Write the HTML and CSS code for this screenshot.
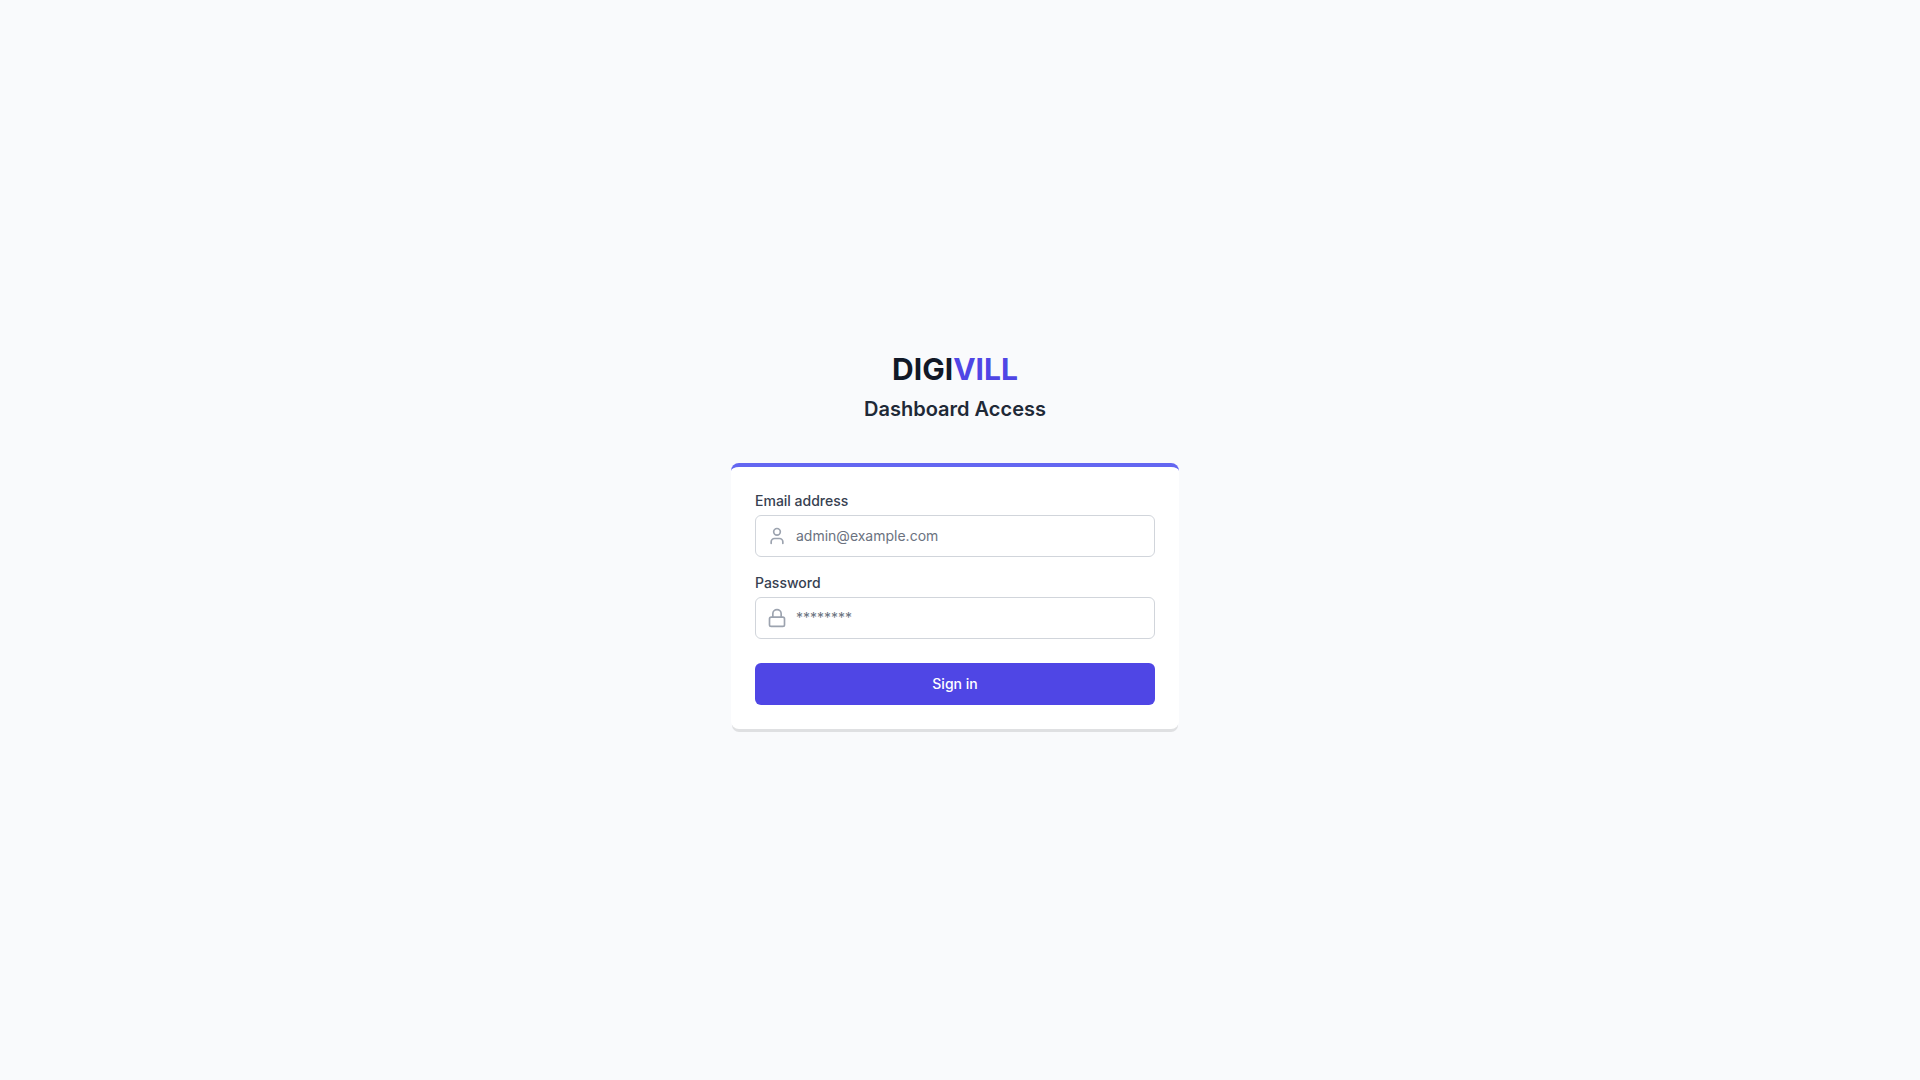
FILE: index.html
```html
<!DOCTYPE html>
<html lang="en">
<head>
    <meta charset="UTF-8">
    <meta name="viewport" content="width=device-width, initial-scale=1.0">
    <title>Digivill - Dashboard Access</title>
    <link rel="stylesheet" href="styles.css">
</head>
<body>
    <main class="login">
        <header class="login-header">
            <h1>DIGI<span>VILL</span></h1>
            <h2>Dashboard Access</h2>
        </header>

        <form class="card" action="#" method="post">
            <!-- Email -->
            <div class="field">
                <label for="email">Email address</label>
                <div class="input-box">
                    <svg class="icon" viewBox="0 0 24 24" aria-hidden="true">
                        <path d="M19 21v-2a4 4 0 0 0-4-4H9a4 4 0 0 0-4 4v2"/>
                        <circle cx="12" cy="7" r="4"/>
                    </svg>
                    <input type="email" id="email" name="email" placeholder="admin@example.com" required>
                </div>
            </div>
            <!-- Password -->
            <div class="field">
                <label for="password">Password</label>
                <div class="input-box">
                    <svg class="icon" viewBox="0 0 24 24" aria-hidden="true">
                        <rect x="3" y="11" width="18" height="11" rx="2"/>
                        <path d="M7 11V7a5 5 0 0 1 10 0v4"/>
                    </svg>
                    <input type="password" id="password" name="password" placeholder="********" required>
                </div>
            </div>
            <button type="submit" class="btn">Sign in</button>
        </form>
    </main>
</body>
</html>
```
FILE: styles.css
```css
* {
    box-sizing: border-box;
}

body {
    margin: 0;
    padding: 16px;
    padding-right: 26px;
    min-height: 100vh;
    display: flex;
    align-items: center;
    justify-content: center;
    background: #f9fafc;
    font-family: 'Inter', sans-serif;
    color: #1f2937;
}

.login {
    width: 100%;
    max-width: 448px;
}

.login-header {
    margin-bottom: 40px;
    text-align: center;
}

.login-header h1 {
    margin: 0;
    font-size: 30px;
    line-height: 36px;
    font-weight: 700;
    color: #111827;
}

.login-header h1 span {
    color: #4f46e5;
}

.login-header h2 {
    margin: 8px 0 0;
    font-size: 20px;
    line-height: 28px;
    font-weight: 600;
}

.card {
    display: flex;
    flex-direction: column;
    gap: 16px;
    padding: 24px;
    background: #fff;
    border-top: 4px solid #6366f1;
    border-radius: 8px;
    box-shadow: 0 4px 0 -1px #dfe0e2;
}

.field label {
    display: block;
    margin-bottom: 4px;
    font-size: 14px;
    line-height: 20px;
    font-weight: 500;
    color: #374151;
}

.input-box {
    position: relative;
}

/* icon sits over the left padding of the input */
.icon {
    position: absolute;
    top: 0;
    bottom: 0;
    left: 12px;
    margin: auto 0;
    width: 20px;
    height: 20px;
    fill: none;
    stroke: #9ca3af;
    stroke-width: 2;
    stroke-linecap: round;
    stroke-linejoin: round;
    pointer-events: none;
}

.input-box input {
    display: block;
    width: 100%;
    height: 42px;
    padding: 8px 12px 10px 40px;
    border: 1px solid #d1d5db;
    border-radius: 6px;
    background: #fff;
    font-family: inherit;
    font-size: 14px;
    line-height: 20px;
    color: #111827;
}

.input-box input::placeholder {
    color: #6b7280;
}

.input-box input:focus {
    outline: none;
    border-color: #6366f1;
}

.btn {
    height: 42px;
    margin-top: 8px;
    border: none;
    border-radius: 6px;
    background: #4f46e5;
    color: #fff;
    font-family: inherit;
    font-size: 14px;
    line-height: 20px;
    font-weight: 500;
    cursor: pointer;
}

.btn:hover {
    background: #4338ca;
}
```
